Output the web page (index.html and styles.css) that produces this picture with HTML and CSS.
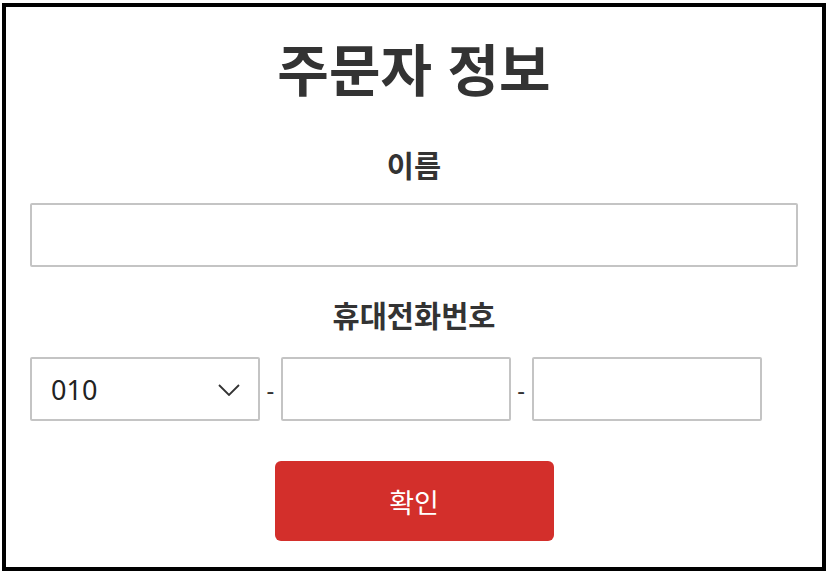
FILE: index.html
```html
<!DOCTYPE html>
<html lang="ko">
<head>
<meta charset="utf-8">
<link rel="stylesheet" href="styles.css">
</head>
<body>
<div class="frame">
  <h1 class="title">주문자 정보</h1>
  <label class="label">이름</label>
  <div class="field full"></div>
  <label class="label phone-label">휴대전화번호</label>
  <div class="phone-row">
    <div class="field select">
      <span class="select-value">010</span>
      <svg class="chevron" width="22" height="12" viewBox="0 0 22 12"><path d="M1 1 L11 11 L21 1" fill="none" stroke="#333" stroke-width="1.8"/></svg>
    </div>
    <span class="dash">-</span>
    <div class="field part"></div>
    <span class="dash">-</span>
    <div class="field part"></div>
  </div>
  <div class="actions">
    <button class="confirm">확인</button>
  </div>
</div>
</body>
</html>
```
FILE: styles.css
```css
html, body {
  margin: 0;
  padding: 0;
  background: #fff;
}
body {
  font-family: "Noto Sans CJK KR", "Noto Sans", sans-serif;
  color: #333;
  padding: 3px 2px 0 2px;
}
.frame {
  box-sizing: border-box;
  width: 824px;
  height: 568px;
  border: 4px solid #000;
  padding: 0 24px;
  display: flex;
  flex-direction: column;
}
.title {
  margin: 25px 0 0;
  font-size: 56px;
  line-height: 70px;
  font-weight: 700;
  text-align: center;
  color: #333;
}
.label {
  display: block;
  margin-top: 44px;
  font-size: 29.5px;
  line-height: 36px;
  font-weight: 700;
  text-align: center;
  color: #333;
}
.field {
  box-sizing: border-box;
  height: 64px;
  border: 2px solid #c4c4c4;
  border-radius: 2px;
  background: #fff;
}
.full {
  margin-top: 21px;
}
.phone-label {
  margin-top: 29px;
}
.phone-row {
  margin-top: 25px;
  display: flex;
  align-items: center;
}
.select, .part {
  width: 230px;
  flex: none;
}
.select {
  display: flex;
  align-items: center;
  justify-content: space-between;
  padding: 0 18px 0 19px;
}
.select-value {
  font-family: "Noto Sans", sans-serif;
  font-size: 27px;
  color: #222;
}
.chevron {
  margin-top: 2px;
}
.dash {
  width: 20.75px;
  flex: none;
  text-align: center;
  font-family: "Noto Sans", sans-serif;
  font-size: 24px;
  color: #333;
}
.actions {
  margin-top: 40px;
  display: flex;
  justify-content: center;
}
.confirm {
  width: 279px;
  height: 80px;
  border: none;
  border-radius: 6px;
  background: #d32f2b;
  color: #fff;
  font-family: "Noto Sans CJK KR", sans-serif;
  font-size: 27px;
  font-weight: 400;
}
```
